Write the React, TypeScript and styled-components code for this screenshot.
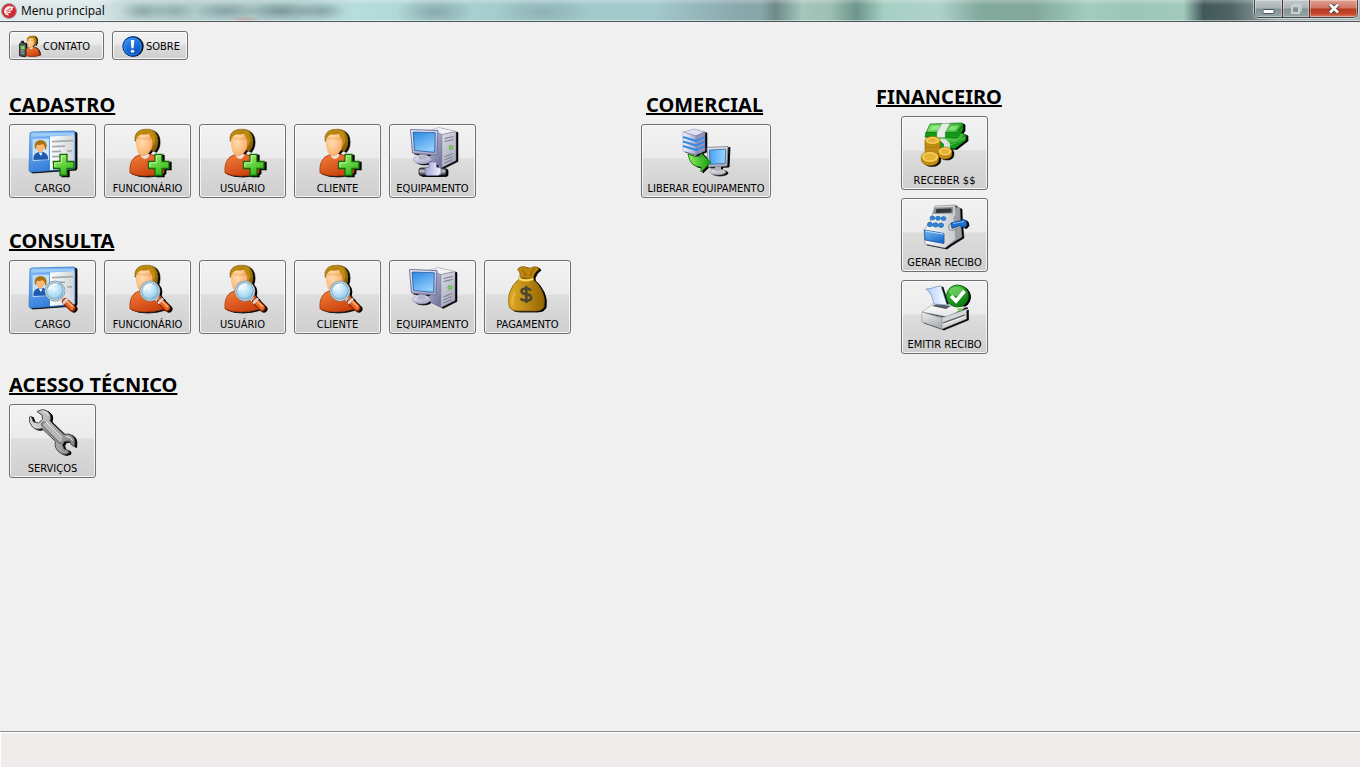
import React from "react";
import styled, { createGlobalStyle } from "styled-components";

const GlobalStyle = createGlobalStyle`
  * { box-sizing: border-box; }
  body { margin: 0; background: #f0f0f0; }
  button { font: inherit; color: inherit; }
`;

const uiFont = `"DejaVu Sans Condensed", Tahoma, "Noto Sans", sans-serif`;

const Window = styled.div`
  min-height: 100vh;
  display: flex;
  flex-direction: column;
  background: #f0f0f0;
  color: #000;
  font-family: ${uiFont};
  font-size: 11px;
  line-height: 13px;
`;

const TitleBar = styled.header`
  height: 22px;
  display: flex;
  align-items: flex-start;
  padding: 0 2px 0 1px;
  border-bottom: 1px solid #4c585b;
  box-shadow: inset 0 -1px 0 rgba(255, 255, 255, 0.5);
  background:
    linear-gradient(180deg, rgba(255, 255, 255, 0.25) 0, rgba(255, 255, 255, 0.06) 4px, transparent 5px),
    radial-gradient(ellipse 16px 4px at 18% 20px, rgba(220, 110, 110, 0.4), transparent),
    radial-gradient(ellipse 24px 9px at 10.6% 11px, rgba(90, 115, 120, 0.4), transparent),
    radial-gradient(ellipse 22px 9px at 12.8% 11px, rgba(90, 115, 120, 0.35), transparent),
    radial-gradient(ellipse 34px 9px at 16.6% 11px, rgba(80, 105, 110, 0.4), transparent),
    radial-gradient(ellipse 36px 9px at 20.6% 11px, rgba(80, 105, 110, 0.5), transparent),
    radial-gradient(ellipse 26px 9px at 23.6% 11px, rgba(80, 105, 110, 0.4), transparent),
    radial-gradient(ellipse 40px 16px at 32% 12px, rgba(90, 120, 125, 0.45), transparent),
    radial-gradient(ellipse 50px 16px at 40% 12px, rgba(100, 130, 135, 0.35), transparent),
    linear-gradient(90deg, #dfe8ea 0%, #dce8ea 7%, #b5cfce 10%, #a9c6c6 22%, #b7dddd 26%, #a5cbcd 37%,
      #a3c9cc 48%, #8aa9ae 54%, #86a6a8 56%, #6f8a88 57%, #a4c6bc 59%, #9dbfb4 61%, #6d958a 63%,
      #a6cfc3 65%, #aed2c9 69%, #83aa9e 72%, #82a89c 76%, #a2cdbd 80%, #9cc6b8 83%, #a2cabb 87%,
      #42585a 88.5%, #4f6464 90.5%, #9fabae 94%, #a7b2b5 100%);
`;

const WindowTitle = styled.h1`
  flex: 1;
  margin: 0;
  padding: 3px 0 0 4px;
  font: 400 12px/16px "Open Sans", "Segoe UI", sans-serif;
`;

const AppMark = styled.svg`
  width: 16px;
  height: 16px;
  margin-top: 3px;
`;

const WindowControls = styled.div`
  display: flex;
  height: 18px;
  border: 1px solid #3d484b;
  border-top: 0;
  border-radius: 0 0 5px 5px;
  overflow: hidden;
  box-shadow: 0 0 0 1px rgba(255, 255, 255, 0.5);
`;

const ControlButton = styled.button<{ $wide?: boolean; $danger?: boolean }>`
  width: ${(p) => (p.$wide ? "48px" : "27px")};
  display: flex;
  align-items: center;
  justify-content: center;
  padding: 0;
  border: 0;
  box-shadow: inset 0 0 0 1px rgba(255, 255, 255, 0.35);
  background: ${(p) =>
    p.$danger
      ? "linear-gradient(180deg, #e0a294 0, #d07462 8px, #b53a21 9px, #c4472c 14px, #d9866d 17px)"
      : "linear-gradient(180deg, #c0c9cb 0, #a9b4b7 8px, #849194 9px, #96a3a6 17px)"};
  & + & { border-left: 1px solid ${(p) => (p.$danger ? "#5b2a24" : "#59666a")}; }
`;

const Toolbar = styled.nav`
  display: flex;
  gap: 8px;
  padding: 9px 9px 0;
`;

const face = `
  border: 1px solid #707070;
  border-radius: 3px;
  box-shadow: inset 0 0 0 1px rgba(255, 255, 255, 0.75);
  background: linear-gradient(180deg, #f2f2f2 0%, #ebebeb 46%, #dddddd 47%, #cfcfcf 100%);
  white-space: nowrap;
  &:hover { border-color: #3c7fb1; }
`;

const ToolButton = styled.button<{ $wide?: boolean }>`
  ${face}
  height: 29px;
  min-width: ${(p) => (p.$wide ? "95px" : "76px")};
  display: flex;
  align-items: center;
  gap: 3px;
  padding: 1px 7px 0 9px;
  svg { width: 21px; height: 21px; filter: drop-shadow(1px 0 0 #000); overflow: visible; }
`;

const Board = styled.main`
  flex: 1;
  display: grid;
  grid-template-columns: 632fr 235fr 475fr;
  align-items: start;
  padding: 25px 9px 24px;
`;

const Column = styled.div<{ $lowered?: boolean }>`
  display: flex;
  flex-direction: column;
  padding-top: ${(p) => (p.$lowered ? "8px" : "0")};
`;

const Group = styled.section<{ $space?: number }>`
  margin-bottom: ${(p) => p.$space ?? 0}px;
`;

const GroupTitle = styled.h2<{ $indent?: number }>`
  margin: 0 0 7px;
  padding-left: ${(p) => p.$indent ?? 0}px;
  font-family: "Noto Sans", Tahoma, sans-serif;
  font-size: 20px;
  line-height: 24px;
  font-weight: 700;
  text-decoration: underline;
  text-decoration-thickness: 2px;
  text-underline-offset: 1px;
  text-decoration-skip-ink: none;
  white-space: nowrap;
`;

const Tiles = styled.div<{ $stacked?: boolean }>`
  display: flex;
  flex-wrap: wrap;
  flex-direction: ${(p) => (p.$stacked ? "column" : "row")};
  align-items: flex-start;
  padding-left: ${(p) => (p.$stacked ? "25px" : "0")};
  gap: 8px;
`;

const Tile = styled.button<{ $wide?: boolean }>`
  ${face}
  width: ${(p) => (p.$wide ? "130px" : "87px")};
  height: 74px;
  display: flex;
  flex-direction: column;
  align-items: center;
  gap: 5px;
  padding: 4px 0 0;
  svg { width: 48px; height: 48px; filter: drop-shadow(2px 1px 0 #000); overflow: visible; }
`;

const StatusBar = styled.footer`
  height: 37px;
  border-top: 1px solid #8e8e8e;
  background: #f0eceb;
  box-shadow: inset 1px 1px 0 #fff, inset 0 -1px 0 #fff;
`;

const Lin = ({ id, a, b, h }: { id: string; a: string; b: string; h?: boolean }) => (
  <linearGradient id={id} x1="0" y1="0" x2={h ? "1" : "0.5"} y2={h ? "0" : "1"}>
    <stop offset="0" stopColor={a} />
    <stop offset="1" stopColor={b} />
  </linearGradient>
);

const Plus = ({ p }: { p: string }) => (
  <g>
    <defs><Lin id={`${p}pl`} a="#a4f56c" b="#35b81c" /></defs>
    <path d="M31 25.500h7v7h7v7h-7v7h-7v-7h-6.500v-7H31z" fill={`url(#${p}pl)`} stroke="#18680c" strokeWidth="1.3" />
    <path d="M32.300 33.800v-7h4.400M25.800 38v-4.200h6.500" fill="none" stroke="#d3ffb4" strokeWidth="0.8" />
  </g>
);

const Lens = ({ p }: { p: string }) => (
  <g>
    <defs>
      <radialGradient id={`${p}ln`} cx="0.4" cy="0.35" r="0.75">
        <stop offset="0" stopColor="#eefaff" /><stop offset="0.6" stopColor="#a9d9f2" /><stop offset="1" stopColor="#5ea8d2" />
      </radialGradient>
    </defs>
    <path d="M32 33l5 5" stroke="#d7dbe0" strokeWidth="4" />
    <path d="M36.500 36.500l6.500 6.500" stroke="#8d2b08" strokeWidth="7" strokeLinecap="round" />
    <path d="M36.500 36l6.500 6.500" stroke="#ed6a24" strokeWidth="5" strokeLinecap="round" />
    <path d="M37.500 35.500l6 6" stroke="#ffb680" strokeWidth="1.4" strokeLinecap="round" />
    <path d="M34 38.500l5-5" stroke="#d8d8dc" strokeWidth="2.4" />
    <circle cx="26" cy="26" r="9.2" fill={`url(#${p}ln)`} stroke="#7895a8" strokeWidth="2.4" />
    <circle cx="26" cy="26" r="9.2" fill="none" stroke="#d9e6ee" strokeWidth="1" />
    <path d="M20 25q2-6 8-5.500" fill="none" stroke="#fff" strokeWidth="1.6" />
  </g>
);

const CardArt = ({ p, children }: { p: string; children?: React.ReactNode }) => (
  <svg viewBox="0 0 48 48" aria-hidden="true">
    <defs><Lin id={`${p}c`} a="#8cc0f5" b="#2c78d8" /><Lin id={`${p}w`} a="#ffffff" b="#cfd3d8" h /><Lin id={`${p}ph`} a="#a9d2fa" b="#e1f1ff" /></defs>
    <path d="M1 5q0-2 2-2L44 2q2 0 2 2v34q0 2-2 2L2 43q-2 0-2-2z" fill={`url(#${p}c)`} stroke="#3b7fce" strokeWidth="0.8" />
    <path d="M21 7.500L45.500 6v33L21 41z" fill={`url(#${p}w)`} />
    <path d="M2 7.500l43-1.200V3.500L3 4z" fill="#9bcbf8" />
    <path d="M4 10.500L19.500 10v20.500L4 31.500z" fill={`url(#${p}ph)`} stroke="#d8ebfd" strokeWidth="0.7" />
    <path d="M4.500 31v-3q1.500-5 7-5.200t7.500 4.700v3z" fill="#1e5bb0" />
    <path d="M9.500 23.500h4l-1.500 3.500z" fill="#fff" />
    <ellipse cx="11.300" cy="17.500" rx="4.300" ry="5.600" fill="#f9b878" />
    <path d="M6 19q-1.500-7 5-8 7.500 0 6.500 8l-1.500 2q0-4-2-6-4 1.500-6 .500-1 2-1 5z" fill="#a9720c" />
    <path d="M23 12.600l21-1M23 17.700l13-.500M23 22.700l9-.400M38 22l5-.200M23 27.700l11-.400M23 33l7-.400" stroke="#a5a8ad" strokeWidth="1.700" />
    {children}
  </svg>
);

const PersonShape = ({ p }: { p: string }) => (
  <g>
    <defs>
      <Lin id={`${p}b`} a="#f5813a" b="#cc4410" />
      <radialGradient id={`${p}f`} cx="0.38" cy="0.4" r="0.7"><stop offset="0" stopColor="#ffdcae" /><stop offset="0.7" stopColor="#fbb877" /><stop offset="1" stopColor="#ea9650" /></radialGradient>
      <Lin id={`${p}h`} a="#c6920f" b="#8c6203" />
    </defs>
    <path d="M6 44q-1-11 5-16 4-3 11-3 11 0 15 7 4 6 3 12-9 3-18 3-10 0-16-3z" fill={`url(#${p}b)`} stroke="#a63a0c" strokeWidth="0.8" />
    <path d="M16.500 25.500l9-.500-1 3q-2 2-4 2-3.500-1-4-4.500z" fill="#e9e0de" />
    <path d="M11 12Q10 2 19 .500q12-2 14.500 7 2 9-3 15l-4-2z" fill={`url(#${p}h)`} stroke="#795403" strokeWidth="0.6" />
    <path d="M12 12q0-4 5-6.500 5 1 8-1 2 4 3.500 6 1 9-3.500 13.500-2.500 3-5.500 3-4 0-6.200-5Q11.500 17 12 12z" fill={`url(#${p}f)`} />
    <path d="M11.500 12Q11 6 15 3.500q6-2 10-1 1 5 4 9l0 6 2.500-6-2-9-7-2-8 2z" fill="#bf8b0e" />
    <path d="M12.500 10q2-4 5-4.500 4 1 7-1 1.500 4 3.500 6" fill={`url(#${p}f)`} />
  </g>
);

const PersonArt = ({ p, children }: { p: string; children?: React.ReactNode }) => (
  <svg viewBox="0 0 48 48" aria-hidden="true"><PersonShape p={p} />{children}</svg>
);

const PcShape = ({ p }: { p: string }) => (
  <g>
    <defs>
      <Lin id={`${p}s`} a="#2b86e0" b="#8fceff" /><Lin id={`${p}t`} a="#dcdde6" b="#a9abbb" /><Lin id={`${p}u`} a="#c4c4dc" b="#7678a0" />
      <Lin id={`${p}m`} a="#f4f4fb" b="#a9a9c8" />
    </defs>
    <path d="M21 5l8-2.500L46 6.500 32 9.500z" fill="#f2f2f8" stroke="#9899ad" strokeWidth="0.5" />
    <path d="M21 5l11 4.500v33L21 37z" fill={`url(#${p}u)`} />
    <path d="M32 9.500l14-3v29l-14 7z" fill={`url(#${p}t)`} stroke="#85869c" strokeWidth="0.5" />
    <path d="M34.500 13.500l9-2M34.500 16.500l9-2M34.500 32l8-3.400M34.500 35l8-3.400M34.500 38l8-3.400" stroke="#777a90" strokeWidth="1" />
    <circle cx="41" cy="22.500" r="1.900" fill="#7ee04e" stroke="#4b8b3a" strokeWidth="0.6" />
    <path d="M9 27l8 1.500v5H10z" fill="#a2a4bf" />
    <ellipse cx="12.500" cy="34.500" rx="9" ry="4.500" fill={`url(#${p}m)`} stroke="#8586a3" strokeWidth="0.6" />
    <ellipse cx="12.500" cy="32.700" rx="4.500" ry="2" fill="#b5b6cd" />
    <path d="M.500 4.500L28 5.500 27 30 2.500 28z" fill={`url(#${p}m)`} stroke="#7173a0" strokeWidth="1" />
    <path d="M3 7L25.300 7.800 24.600 27.300 4.600 25.500z" fill={`url(#${p}s)`} stroke="#235b9d" strokeWidth="0.8" />
  </g>
);

const PcArt = () => <svg viewBox="0 0 48 48" aria-hidden="true"><PcShape p="pc" /></svg>;

const PcNetworkArt = () => (
  <svg viewBox="0 0 48 48" aria-hidden="true">
    <g transform="translate(1 -4)"><PcShape p="pn" /></g>
    <defs>
      <linearGradient id="cyl" x1="0" y1="0" x2="0" y2="1"><stop offset="0" stopColor="#33353b" /><stop offset="0.4" stopColor="#c9ccd4" /><stop offset="1" stopColor="#15161a" /></linearGradient>
      <Lin id="tee" a="#a2a4d4" b="#f2f2ff" h />
    </defs>
    <rect x="10" y="39" width="27" height="7.500" rx="2" fill="url(#cyl)" stroke="#17181c" strokeWidth="0.8" />
    <path d="M20 33h7.500v5l4.500 1v6l-3 1.500H18L16 45v-6l4-1z" fill="url(#tee)" stroke="#7173a5" strokeWidth="0.8" />
  </svg>
);

const MoneyBagArt = () => (
  <svg viewBox="0 0 48 48" aria-hidden="true">
    <defs><Lin id="bag" a="#e2ac26" b="#936503" h /></defs>
    <path d="M15 14q-7 6-9.500 14-2 10 .500 15 2 3 8 3h18q6 0 8-4 1.500-9-2-16-4-8-9.500-12z" fill="url(#bag)" stroke="#805a05" strokeWidth="0.8" />
    <path d="M16 12q1-4-2.500-8 5-4 9-1.500 4 1.500 8-1 4 .500 4.500 3-4 2-6 8-7 2-13-.500z" fill="#bd850e" stroke="#815905" strokeWidth="0.7" />
    <path d="M18 5q3 2 4 6M31 3q-4 3-5 8" stroke="#7b5304" fill="none" />
    <path d="M14.500 12.500q7 3.500 15 0v2.500q-8 3-15 0z" fill="#ffe16b" stroke="#c6950f" strokeWidth="0.4" />
    <path d="M11 27q-3 6-2.500 13" fill="none" stroke="#f2c650" strokeWidth="2" opacity=".6" />
    <path d="M27 25.500q-2-2-5-2-4.500 0-4.500 2.800 0 2.400 4.700 3 5 .700 5 3.500-.2 2.800-5.200 2.800-3.500 0-5.500-2M22.300 21v17" fill="none" stroke="#4c4531" strokeWidth="2.500" />
  </svg>
);

const DeployArt = () => (
  <svg viewBox="0 0 48 48" aria-hidden="true">
    <defs><Lin id="sv" a="#f7f7ff" b="#a7a9ce" h /><Lin id="sc" a="#48a1f0" b="#9dd6ff" h /><Lin id="ar" a="#8cf05c" b="#129a11" h /><Lin id="mo" a="#f3f3f5" b="#b2b3bb" /></defs>
    <path d="M1 3L12 0l11 3-9 4z" fill="#dfe0f2" stroke="#8c8eb5" strokeWidth="0.5" />
    <path d="M1 3l13 4v19L1 22z" fill="url(#sv)" stroke="#898bb3" strokeWidth="0.5" />
    <path d="M14 7l9-4v19l-9 4z" fill="#9193bd" stroke="#797ba8" strokeWidth="0.5" />
    <path d="M1 8l13 4 9-4M1 12.500l13 4 9-4M1 17l13 4 9-4" stroke="#2f8be2" strokeWidth="1.900" fill="none" />
    <ellipse cx="36" cy="43" rx="8" ry="3" fill="url(#mo)" stroke="#8b8c94" strokeWidth="0.6" />
    <path d="M33 36h6v6h-6z" fill="#b2b3bb" />
    <path d="M25 18.500L46 17.500 45 37 26.500 38z" fill="url(#mo)" stroke="#85868e" strokeWidth="0.9" />
    <path d="M27.300 21l16.500-.800L43 34.500l-15 .800z" fill="url(#sc)" stroke="#2b68a5" strokeWidth="0.8" />
    <path d="M6 25q6 3 13 3v-4l10 9.500L19 43v-5Q8 38 6 25z" fill="url(#ar)" stroke="#157510" strokeWidth="0.9" />
  </svg>
);

const Coin = ({ x, y, rx, ry }: { x: number; y: number; rx: number; ry: number }) => (
  <g stroke="#9b6d08" strokeWidth="0.6">
    <path d={`M${x - rx} ${y}v3a${rx} ${ry} 0 0 0 ${rx * 2} 0v-3z`} fill="#c58d12" />
    <ellipse cx={x} cy={y} rx={rx} ry={ry} fill="#f4c642" />
    <ellipse cx={x} cy={y} rx={rx - 2.2} ry={ry - 1.4} fill="#e6b434" stroke="#ffe38a" />
  </g>
);

const MoneyArt = () => (
  <svg viewBox="0 0 48 48" aria-hidden="true">
    <defs><Lin id="bl" a="#79e36c" b="#2fae2a" h /></defs>
    <g stroke="#0f6a12" strokeWidth="0.7">
      <path d="M9 13l29-2 7 3-10 8-27-2z" fill="url(#bl)" /><path d="M45 14v5L34 27.500 14 26v-5h21z" fill="#169a1a" />
      <path d="M9 3l32-1 1 1-6 9H5z" fill="url(#bl)" /><path d="M42 3v6l-6 8-32-1 1-5 31 1z" fill="#149a19" />
    </g>
    <path d="M12 5l8-.500-3 4-8 .500zM30 5l8-.500-4 5-7-.500z" fill="#b5f3a5" opacity=".6" />
    <path d="M21 2.500h8l-5 9v5h-8v-5z" fill="#e9ebe9" stroke="#a5aaa5" strokeWidth="0.5" />
    <path d="M17 18l7 0 5 4v6h-6v-5z" fill="#dfe2df" />
    <path d="M26 23l18-7M26 25.500l18-8" stroke="#7ee271" strokeWidth="0.6" />
    <Coin x={11.5} y={27} rx={7.5} ry={4} /><Coin x={11.5} y={23} rx={7.5} ry={4} /><Coin x={11.5} y={19.5} rx={7.5} ry={4} />
    <Coin x={24} y={30.5} rx={6.8} ry={4.5} />
    <Coin x={9} y={36} rx={8.7} ry={5.5} />
  </svg>
);

const RegisterArt = () => (
  <svg viewBox="0 0 48 48" aria-hidden="true">
    <defs><Lin id="rg" a="#fbfbfb" b="#c7c9cc" h /><Lin id="rd" a="#7bbcf7" b="#1d6fd0" /></defs>
    <path d="M31 3l8 2 .500 14 1.500 15-17 10.500z" fill="#9a9da2" stroke="#777a80" strokeWidth="0.6" />
    <path d="M14 3l20-1 1 9-2 4 2 21-11 9-20-4-1-14 6-8z" fill="url(#rg)" stroke="#8b8e92" strokeWidth="0.7" />
    <path d="M13.500 4.500l18.500-.500v6.500l-20 .500z" fill="#8c8f93" /><path d="M15.500 6l15-.500v4L14.500 10z" fill="#33363a" />
    <g fill="#2f86df" stroke="#135299" strokeWidth="0.6">
      {[0, 1, 2].map((i) => (
        <React.Fragment key={i}>
          <ellipse cx={11.5 + i * 5.5} cy={15 + i * 0.3} rx="2.4" ry="2" />
          <ellipse cx={9 + i * 5.5} cy={21.5 + i * 0.4} rx="2.6" ry="2.2" />
        </React.Fragment>
      ))}
    </g>
    <path d="M3.500 27l19.500 3.500v10L4 37z" fill="url(#rd)" stroke="#145294" strokeWidth="0.8" />
    <path d="M4.500 28l18 3.200" stroke="#bfe0ff" />
    <circle cx="31" cy="24" r="3.500" fill="#d4d6d9" stroke="#777a80" strokeWidth="0.8" />
    <path d="M30 20l8-2 5-1.500q3 1 3 5-1 2.500-3 3l-5-2-7 3z" fill="#1d6fce" stroke="#0d448a" strokeWidth="0.8" />
    <path d="M32 20.500l11-2" stroke="#82bef8" strokeWidth="1.200" />
  </svg>
);

const PrinterArt = () => (
  <svg viewBox="0 0 48 48" aria-hidden="true">
    <defs><Lin id="pp" a="#a9cdfb" b="#ffffff" h /><Lin id="pt" a="#ffffff" b="#e4e6e8" /><Lin id="pf" a="#f0f1f2" b="#aeb0b3" /><Lin id="ok" a="#4fcf45" b="#0b7d14" /></defs>
    <path d="M1 27l13-9 31 4-18 10z" fill="url(#pt)" stroke="#a5a8ab" strokeWidth="0.7" />
    <path d="M1 27l20 6v11L1 37z" fill="url(#pf)" stroke="#8f9295" strokeWidth="0.6" />
    <path d="M21 33l24.500-9v10L21 44z" fill="#d4d6d8" stroke="#8f9295" strokeWidth="0.6" />
    <path d="M22 38l22-8" stroke="#6b6e72" strokeWidth="1.400" /><path d="M22 39.500l22-8" stroke="#fff" strokeWidth="0.8" />
    <path d="M11 21l14 3 5-3-14-2z" fill="#56595e" />
    <path d="M5 4q5 0 9-2l6-1 6 19-13-1Q11 8 5 4z" fill="url(#pp)" stroke="#6c8eb8" strokeWidth="0.7" />
    <ellipse cx="39" cy="24.500" rx="2.800" ry="1.300" fill="#71dc53" />
    <circle cx="36.500" cy="11" r="11" fill="url(#ok)" stroke="#0a6a11" strokeWidth="0.9" />
    <ellipse cx="35.500" cy="6.500" rx="7.500" ry="4.500" fill="#a5eb92" opacity=".4" />
    <path d="M30 11l5 5 8.500-10" fill="none" stroke="#fff" strokeWidth="3.600" />
  </svg>
);

const WrenchArt = () => (
  <svg viewBox="0 0 48 48" aria-hidden="true">
    <defs><Lin id="wr" a="#dcdcdc" b="#848484" h /></defs>
    <path d="M8 2.500l5.500-2q5 .500 7.500 4.500 1.500 3.500 0 7L35 25.500q7-2 10 3.500 1.500 3 .500 8.500l-3-1.500-2-4-5 .500-2 3.500 1.500 4 4.500 1.500.500 2.500q-5 3-10-1-5-4-3.500-10.500L13 19.500q-6 2-9.500-1.500Q-.500 14 .500 8l1.500-1 2.500 6 5 1 4-3.500-.500-4.500z" fill="url(#wr)" stroke="#4c4c4c" strokeWidth="1" />
    <path d="M15 15.500L31 32" stroke="#7b7b7b" strokeWidth="6" strokeLinecap="round" />
    <path d="M16 15.500L31.500 31" stroke="#b8b8b8" strokeWidth="4" strokeLinecap="round" />
    <path d="M17 13L33 28.500M13.500 2q5 1 6 5M37 27.500q5 0 6.500 4" fill="none" stroke="#f1f1f1" strokeWidth="1" />
  </svg>
);

const ContactArt = () => (
  <svg viewBox="0 0 48 48" aria-hidden="true">
    <g transform="translate(7 0)"><PersonShape p="ct" /></g>
    <path d="M1 18l4-2v-4h3v4l8 1v27l-4 3-11-2z" fill="#55595b" stroke="#24282a" strokeWidth="2" />
    <path d="M4 22l9 1v8l-9-1z" fill="#75d85f" /><path d="M4 34l8 1M4 39l8 1" stroke="#a2a7a9" strokeWidth="2.500" />
  </svg>
);

const InfoArt = () => (
  <svg viewBox="0 0 48 48" aria-hidden="true">
    <defs><Lin id="inf" a="#3c9cff" b="#0550bd" /></defs>
    <circle cx="24" cy="24" r="22" fill="url(#inf)" stroke="#063d91" strokeWidth="2.500" />
    <circle cx="24" cy="24" r="19.500" fill="none" stroke="#4a9cf0" strokeWidth="1.500" />
    <path d="M20 9h8l-1.500 19h-5z" fill="#fff" /><ellipse cx="24" cy="35" rx="4" ry="3.500" fill="#fff" />
  </svg>
);

type Item = { label: string; art: React.ReactNode; wide?: boolean };

const cadastro: Item[] = [
  { label: "CARGO", art: <CardArt p="ca"><Plus p="ca" /></CardArt> },
  { label: "FUNCIONÁRIO", art: <PersonArt p="cb"><Plus p="cb" /></PersonArt> },
  { label: "USUÁRIO", art: <PersonArt p="cc"><Plus p="cc" /></PersonArt> },
  { label: "CLIENTE", art: <PersonArt p="cd"><Plus p="cd" /></PersonArt> },
  { label: "EQUIPAMENTO", art: <PcNetworkArt /> },
];

const consulta: Item[] = [
  { label: "CARGO", art: <CardArt p="qa"><Lens p="qa" /></CardArt> },
  { label: "FUNCIONÁRIO", art: <PersonArt p="qb"><Lens p="qb" /></PersonArt> },
  { label: "USUÁRIO", art: <PersonArt p="qc"><Lens p="qc" /></PersonArt> },
  { label: "CLIENTE", art: <PersonArt p="qd"><Lens p="qd" /></PersonArt> },
  { label: "EQUIPAMENTO", art: <PcArt /> },
  { label: "PAGAMENTO", art: <MoneyBagArt /> },
];

const financeiro: Item[] = [
  { label: "RECEBER $$", art: <MoneyArt /> },
  { label: "GERAR RECIBO", art: <RegisterArt /> },
  { label: "EMITIR RECIBO", art: <PrinterArt /> },
];

const MenuGroup = ({ title, items, space, indent, stacked }: {
  title: string; items: Item[]; space?: number; indent?: number; stacked?: boolean;
}) => (
  <Group $space={space}>
    <GroupTitle $indent={indent}>{title}</GroupTitle>
    <Tiles $stacked={stacked}>
      {items.map((it) => (
        <Tile key={it.label} type="button" $wide={it.wide}>{it.art}<span>{it.label}</span></Tile>
      ))}
    </Tiles>
  </Group>
);

export default function App() {
  return (
    <Window>
      <GlobalStyle />
      <TitleBar>
        <AppMark viewBox="0 0 16 16" aria-hidden="true">
          <circle cx="8" cy="8" r="7.500" fill="#d32a30" stroke="#a3a3a8" />
          <path d="M3 9q0-5 5-6l5 1-2 2 1 1-3 1 1 2-3 0 1 2.500Q4 12.500 3 9z" fill="#fff" opacity=".9" />
          <path d="M5 8l5-3M5.500 10l4-3" stroke="#d32a30" strokeWidth="0.8" />
        </AppMark>
        <WindowTitle>Menu principal</WindowTitle>
        <WindowControls>
          <ControlButton type="button" aria-label="Minimizar">
            <svg width="13" height="16" viewBox="0 0 13 16"><rect x="1" y="8.500" width="11" height="4" rx="1" fill="#fff" stroke="#4d5663" /></svg>
          </ControlButton>
          <ControlButton type="button" aria-label="Restaurar" disabled>
            <svg width="13" height="16" viewBox="0 0 13 16" fill="none" stroke="#c8cfd1"><path d="M4 4V3h7v7h-1" strokeWidth="1.500" /><rect x="2" y="5" width="7" height="7" strokeWidth="2" /><rect x="4" y="7" width="3" height="3" stroke="#7f8b8e" /></svg>
          </ControlButton>
          <ControlButton type="button" aria-label="Fechar" $wide $danger>
            <svg width="14" height="16" viewBox="0 0 14 16"><path d="M3 3.500l8 8M11 3.500l-8 8" stroke="#4b3a46" strokeWidth="4.500" /><path d="M3 3.500l8 8M11 3.500l-8 8" stroke="#fff" strokeWidth="2.600" /></svg>
          </ControlButton>
        </WindowControls>
      </TitleBar>
      <Toolbar>
        <ToolButton type="button" $wide><ContactArt /><span>CONTATO</span></ToolButton>
        <ToolButton type="button"><InfoArt /><span>SOBRE</span></ToolButton>
      </Toolbar>
      <Board>
        <Column $lowered>
          <MenuGroup title="CADASTRO" items={cadastro} space={31} />
          <MenuGroup title="CONSULTA" items={consulta} space={39} />
          <MenuGroup title="ACESSO TÉCNICO" items={[{ label: "SERVIÇOS", art: <WrenchArt /> }]} />
        </Column>
        <Column $lowered>
          <MenuGroup title="COMERCIAL" indent={5} items={[{ label: "LIBERAR EQUIPAMENTO", art: <DeployArt />, wide: true }]} />
        </Column>
        <Column>
          <MenuGroup title="FINANCEIRO" items={financeiro} stacked />
        </Column>
      </Board>
      <StatusBar />
    </Window>
  );
}
